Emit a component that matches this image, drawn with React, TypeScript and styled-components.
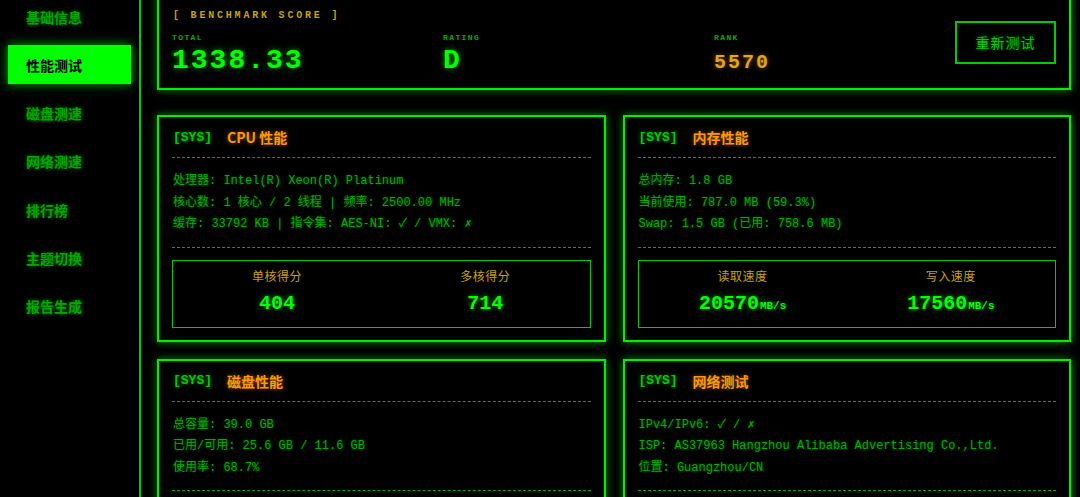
import styled, { createGlobalStyle } from "styled-components";

const mono = `"Liberation Mono", "Noto Sans CJK SC", monospace`;
const cjk = `"Noto Sans CJK SC", "Liberation Sans", sans-serif`;

const colors = {
  bg: "#000",
  neon: "#00ee00",
  green: "#00cc00",
  dim: "#00b000",
  orange: "#ff9900",
  amber: "#e0a615",
  gold: "#c9a300",
};

const GlobalStyle = createGlobalStyle`
  html, body {
    margin: 0;
    background: ${colors.bg};
    overflow: hidden;
  }
  * { box-sizing: border-box; }
`;

const menu = ["基础信息", "性能测试", "磁盘测速", "网络测速", "排行榜", "主题切换", "报告生成"];

type Card = {
  title: string;
  lines: string[];
  scores: { label: string; value: string; unit?: string }[];
};

const cards: Card[] = [
  {
    title: "CPU 性能",
    lines: [
      "处理器: Intel(R) Xeon(R) Platinum",
      "核心数: 1 核心 / 2 线程 | 频率: 2500.00 MHz",
      "缓存: 33792 KB | 指令集: AES-NI: ✓ / VMX: ✗",
    ],
    scores: [
      { label: "单核得分", value: "404" },
      { label: "多核得分", value: "714" },
    ],
  },
  {
    title: "内存性能",
    lines: ["总内存: 1.8 GB", "当前使用: 787.0 MB (59.3%)", "Swap: 1.5 GB (已用: 758.6 MB)"],
    scores: [
      { label: "读取速度", value: "20570", unit: "MB/s" },
      { label: "写入速度", value: "17560", unit: "MB/s" },
    ],
  },
  {
    title: "磁盘性能",
    lines: ["总容量: 39.0 GB", "已用/可用: 25.6 GB / 11.6 GB", "使用率: 68.7%"],
    scores: [
      { label: "顺序读取", value: "182", unit: "MB/s" },
      { label: "顺序写入", value: "146", unit: "MB/s" },
    ],
  },
  {
    title: "网络测试",
    lines: [
      "IPv4/IPv6: ✓ / ✗",
      "ISP: AS37963 Hangzhou Alibaba Advertising Co.,Ltd.",
      "位置: Guangzhou/CN",
    ],
    scores: [
      { label: "下载速度", value: "95", unit: "Mbps" },
      { label: "上传速度", value: "48", unit: "Mbps" },
    ],
  },
];

export default function App() {
  return (
    <Page>
      <GlobalStyle />
      <Sidebar>
        {menu.map((m) => (
          <NavItem key={m} $active={m === "性能测试"}>
            {m}
          </NavItem>
        ))}
      </Sidebar>
      <Main>
        <BenchCard>
          <div>
            <BenchHeading>[ BENCHMARK SCORE ]</BenchHeading>
            <Stats>
              <Stat>
                <StatLabel>TOTAL</StatLabel>
                <BigValue>1338.33</BigValue>
              </Stat>
              <Stat>
                <StatLabel>RATING</StatLabel>
                <BigValue>D</BigValue>
              </Stat>
              <Stat>
                <StatLabel>RANK</StatLabel>
                <RankValue>5570</RankValue>
              </Stat>
            </Stats>
          </div>
          <RetestButton>重新测试</RetestButton>
        </BenchCard>

        <CardGrid>
          {cards.map((c) => (
            <Panel key={c.title}>
              <PanelHeader>
                <Tag>[SYS]</Tag>
                <PanelTitle>{c.title}</PanelTitle>
              </PanelHeader>
              <Info>
                {c.lines.map((l) => (
                  <div key={l}>{l}</div>
                ))}
              </Info>
              <ScoreBox>
                {c.scores.map((s) => (
                  <Score key={s.label}>
                    <ScoreLabel>{s.label}</ScoreLabel>
                    <ScoreValue>
                      {s.value}
                      {s.unit && <Unit>{s.unit}</Unit>}
                    </ScoreValue>
                  </Score>
                ))}
              </ScoreBox>
            </Panel>
          ))}
        </CardGrid>
      </Main>
    </Page>
  );
}

const Page = styled.div`
  display: flex;
  min-height: calc(100vh + 24px);
  margin-top: -24px;
  background: ${colors.bg};
`;

const Sidebar = styled.nav`
  width: 141px;
  flex-shrink: 0;
  border-right: 2px solid ${colors.green};
  padding: 21px 8px 0;
  display: flex;
  flex-direction: column;
  gap: 9.33px;
`;

const NavItem = styled.div<{ $active?: boolean }>`
  height: 39px;
  display: flex;
  align-items: center;
  padding-left: 18px;
  font-family: ${cjk};
  font-size: 14px;
  font-weight: 700;
  color: ${(p) => (p.$active ? "#000" : "#00a800")};
  background: ${(p) => (p.$active ? "#00ff00" : "transparent")};
  box-shadow: ${(p) => (p.$active ? "0 0 10px rgba(0,255,0,0.7)" : "none")};
  text-shadow: ${(p) => (p.$active ? "none" : "0 0 4px rgba(0,200,0,0.6)")};
`;

const Main = styled.main`
  flex: 1;
  min-width: 0;
  padding: 16px 9px 16px 16px;
`;

const glowBox = `
  border: 2px solid ${colors.neon};
  box-shadow: 0 0 8px rgba(0, 255, 0, 0.55), inset 0 0 4px rgba(0, 255, 0, 0.15);
`;

const BenchCard = styled.section`
  ${glowBox}
  display: flex;
  align-items: center;
  justify-content: space-between;
  padding: 14px 13px 12px 13px;
`;

const BenchHeading = styled.div`
  font-family: ${mono};
  font-size: 10px;
  line-height: 12px;
  font-weight: 700;
  letter-spacing: 2.8px;
  color: ${colors.gold};
  margin: 2px 0 11px 1px;
`;

const Stats = styled.div`
  display: grid;
  grid-template-columns: 271px 271px auto;
`;

const Stat = styled.div`
  display: flex;
  flex-direction: column;
`;

const StatLabel = styled.div`
  font-family: ${mono};
  font-size: 8px;
  line-height: 10px;
  font-weight: 700;
  letter-spacing: 1.4px;
  color: ${colors.dim};
  margin-bottom: 3px;
`;

const BigValue = styled.div`
  font-family: ${mono};
  font-size: 28px;
  line-height: 30px;
  font-weight: 700;
  letter-spacing: 2px;
  color: #00ff00;
  text-shadow: 0 0 6px rgba(0, 255, 0, 0.6);
`;

const RankValue = styled(BigValue)`
  font-size: 20px;
  line-height: 26px;
  letter-spacing: 2px;
  padding-top: 4px;
  color: ${colors.amber};
  text-shadow: 0 0 5px rgba(255, 170, 0, 0.5);
`;

const RetestButton = styled.button`
  flex-shrink: 0;
  width: 101px;
  height: 43px;
  background: transparent;
  border: 2px solid ${colors.green};
  color: ${colors.green};
  font-family: ${cjk};
  font-size: 14px;
  letter-spacing: 1px;
  text-shadow: 0 0 4px rgba(0, 255, 0, 0.5);
  cursor: pointer;
`;

const CardGrid = styled.div`
  display: grid;
  grid-template-columns: minmax(0, 1fr) minmax(0, 1fr);
  gap: 17px;
  margin-top: 25px;
`;

const Panel = styled.section`
  ${glowBox}
  padding: 12px 13px 12px;
  min-width: 0;
`;

const PanelHeader = styled.div`
  display: flex;
  align-items: center;
  height: 16px;
  box-sizing: content-box;
  padding: 0 0 12px 1px;
  border-bottom: 1px dashed ${colors.dim};
`;

const Tag = styled.span`
  font-family: ${mono};
  font-size: 13px;
  font-weight: 700;
  color: ${colors.green};
  text-shadow: 0 0 4px rgba(0, 255, 0, 0.5);
`;

const PanelTitle = styled.span`
  margin-left: 15px;
  font-family: ${cjk};
  font-size: 14px;
  font-weight: 700;
  color: ${colors.orange};
  text-shadow: 0 0 5px rgba(255, 153, 0, 0.55);
`;

const Info = styled.div`
  padding: 13px 0 11px 1px;
  border-bottom: 1px dashed ${colors.dim};
  font-family: ${mono};
  font-size: 12px;
  line-height: 21.5px;
  color: ${colors.dim};
  text-shadow: 0 0 3px rgba(0, 200, 0, 0.45);
  white-space: nowrap;
  overflow: hidden;
`;

const ScoreBox = styled.div`
  margin-top: 12px;
  border: 1px solid ${colors.green};
  display: grid;
  grid-template-columns: 1fr 1fr;
  padding: 7px 0 11px;
`;

const Score = styled.div`
  display: flex;
  flex-direction: column;
  align-items: center;
`;

const ScoreLabel = styled.div`
  font-family: ${cjk};
  font-size: 12px;
  line-height: 16px;
  color: ${colors.gold};
  letter-spacing: 0.5px;
  margin-bottom: 8px;
`;

const ScoreValue = styled.div`
  font-family: ${mono};
  font-size: 20px;
  line-height: 24px;
  height: 24px;
  font-weight: 700;
  color: #00ff00;
  text-shadow: 0 0 6px rgba(0, 255, 0, 0.55);
`;

const Unit = styled.span`
  font-size: 11px;
  line-height: 1;
  margin-left: 1px;
`;
